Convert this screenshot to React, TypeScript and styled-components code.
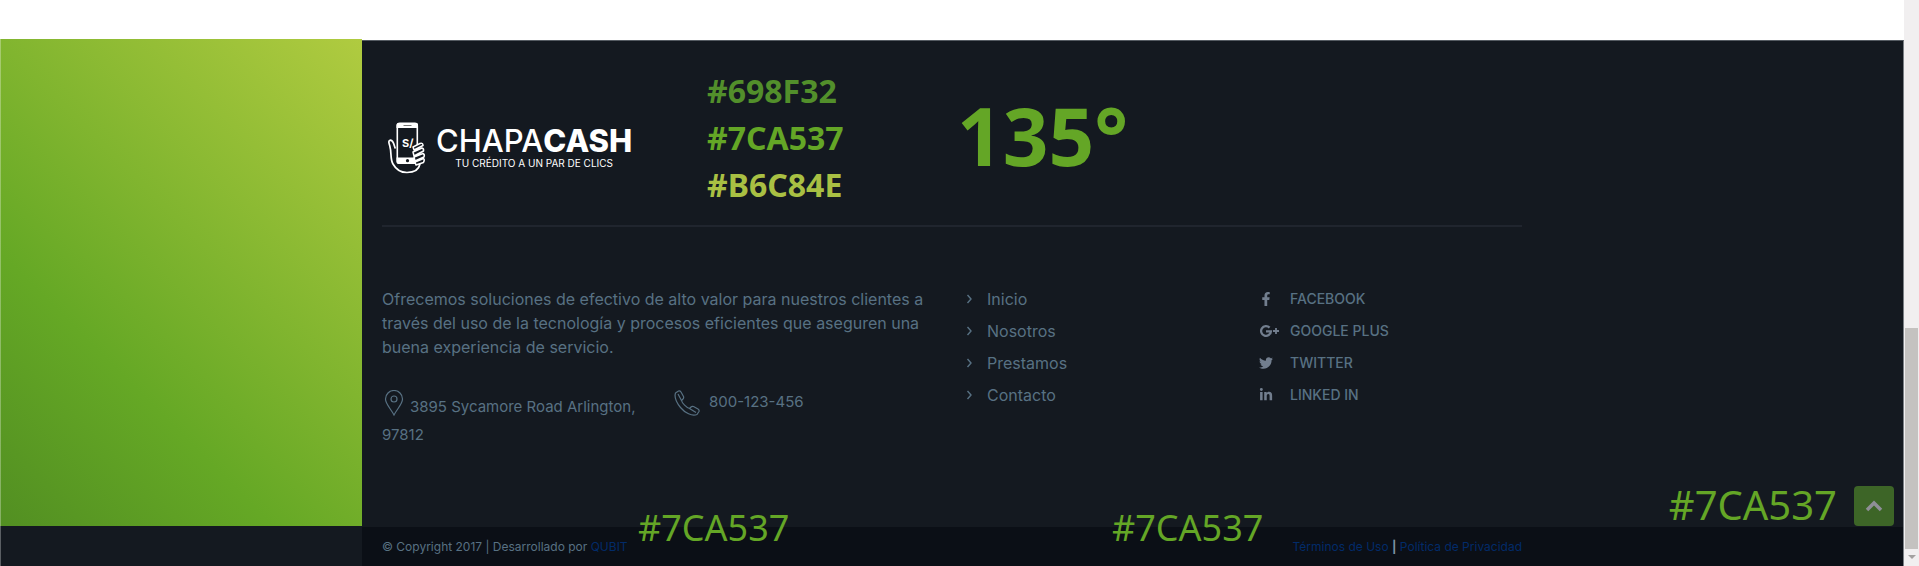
import React from 'react';
import styled, { createGlobalStyle } from 'styled-components';
import { FaFacebookF, FaTwitter, FaLinkedinIn } from 'react-icons/fa';

const Global = createGlobalStyle`
  * { box-sizing: border-box; }
  body { margin: 0; background: #fff; font-family: Inter, 'Noto Sans', sans-serif; }
  ul, p, h1 { margin: 0; padding: 0; list-style: none; }
  a { text-decoration: none; color: inherit; }
`;

const Screen = styled.div`
  display: flex;
  min-height: 100vh;
  overflow: hidden;
`;

const Page = styled.div`
  flex: 1;
  display: flex;
  flex-direction: column;
  padding-top: 39px;
  position: relative;
`;

const Body = styled.div`
  flex: 1;
  display: flex;
`;

const Side = styled.aside`
  width: 362px;
  flex: none;
  display: flex;
  flex-direction: column;
  background: #141920;
`;

const Swatch = styled.div`
  flex: 1;
  border-left: 1px solid rgba(255, 255, 255, 0.3);
  background: linear-gradient(45deg, #528f22 0%, #65a825 32%, #b0cb40 100%) border-box;
`;

const SideBase = styled.div`
  height: 40px;
  border-left: 1px solid rgba(255, 255, 255, 0.3);
`;

const Footer = styled.footer`
  flex: 1;
  display: flex;
  flex-direction: column;
  margin-top: 1px;
  border-top: 1px solid #555b62;
  border-right: 1px solid #7b8085;
  background: #141920;
  color: #587183;
`;

const Container = styled.div`
  width: 100%;
  max-width: 1160px;
  padding: 0 0 0 20px;
`;

const Top = styled(Container)`
  display: flex;
  height: 184px;
`;

const Brand = styled.a`
  display: flex;
  align-items: flex-start;
  width: 325px;
  padding: 80px 0 0 6px;
  gap: 7px;
  color: #fff;
`;

const BrandText = styled.span`
  display: flex;
  flex-direction: column;
  align-items: center;
  padding-top: 4px;
`;

const BrandName = styled.span`
  font-size: 31px;
  line-height: 32px;
  font-weight: 500;
  b { font-weight: 800; }
`;

const Tagline = styled.span`
  font-size: 10px;
  line-height: 12px;
  font-weight: 400;
`;

const Codes = styled.ul`
  width: 250px;
  padding-top: 26px;
  font: 700 32px/47px 'Noto Sans', sans-serif;
`;

const Code = styled.li<{ $color: string }>`
  color: ${(p) => p.$color};
`;

const Angle = styled.p`
  padding-top: 39px;
  font: 700 80px/110px 'Noto Sans', sans-serif;
  color: #64a626;
`;

const Rule = styled.hr`
  width: calc(100% - 20px);
  max-width: 1140px;
  height: 2px;
  margin: 0 0 0 20px;
  border: 0;
  background: #20252e;
`;

const Columns = styled(Container)`
  display: flex;
  flex: 1;
  padding-top: 60px;
`;

const About = styled.section`
  width: 584px;
  font-size: 15px;
`;

const Intro = styled.p`
  width: 550px;
  font-size: 16px;
  line-height: 24px;
`;

const Contact = styled.div`
  display: flex;
  padding-top: 31px;
  line-height: 28px;
`;

const Address = styled.p`
  width: 292px;
  padding-right: 20px;
  svg { vertical-align: -4px; margin-right: 4px; }
`;

const Phone = styled.p`
  display: flex;
  gap: 9px;
  line-height: 24px;
`;

const Menu = styled.ul<{ $width: number; $gap: number; $size: number; $weight: number }>`
  width: ${(p) => p.$width}px;
  font-size: ${(p) => p.$size}px;
  font-weight: ${(p) => p.$weight};
  line-height: 24px;
  li { margin-bottom: 8px; }
  a { display: flex; align-items: center; }
  svg { flex: none; margin-right: ${(p) => p.$gap}px; }
`;

const Bottom = styled.div`
  height: 39px;
  background: #0b0f16;
`;

const BottomRow = styled(Container)`
  display: flex;
  justify-content: space-between;
  font-size: 12px;
  line-height: 40px;
  a { color: #022b69; }
`;

const Separator = styled.b`
  color: #7d93a3;
`;

const Note = styled.span<{ $left: number; $bottom: number; $size: number }>`
  position: absolute;
  left: ${(p) => p.$left}px;
  bottom: ${(p) => p.$bottom}px;
  font: 400 ${(p) => p.$size}px/48px 'Noto Sans', sans-serif;
  color: #64a626;
`;

const RightNote = styled(Note)`
  left: auto;
  right: 67px;
`;

const UpButton = styled.button`
  position: absolute;
  right: 10px;
  bottom: 40px;
  width: 40px;
  height: 40px;
  padding: 0;
  border: 0;
  border-radius: 4px;
  background: #3d6527;
  display: flex;
  align-items: center;
  justify-content: center;
`;

const ScrollTrack = styled.div`
  width: 15px;
  flex: none;
  display: flex;
  flex-direction: column;
  justify-content: flex-end;
  align-items: center;
  background: #f1eff0;
`;

const ScrollThumb = styled.div`
  width: 13px;
  height: 221px;
  background: #c4c2c0;
`;

const ScrollArrow = styled.svg`
  margin: 6px 0 7px;
`;

const Chevron = () => (
  <svg width="7" height="10" viewBox="0 0 7 10" fill="none" stroke="currentColor" strokeWidth="1.4">
    <path d="M1.5 1 L5 5 L1.5 9" />
  </svg>
);

const GooglePlus = () => (
  <svg width="20" height="14" viewBox="0 0 20 14">
    <path d="M10.6 3.6A4.9 4.9 0 1 0 11.9 7.3H7" fill="none" stroke="currentColor" strokeWidth="2.3" />
    <path d="M14 7h6M17 4v6" stroke="currentColor" strokeWidth="1.8" />
  </svg>
);

const LogoMark = () => (
  <svg width="41" height="53" viewBox="0 0 41 53" fill="none" stroke="#fff">
    <rect x="9.3" y="2.3" width="20" height="40" rx="2.5" strokeWidth="1.6" />
    <path d="M8.500 7V4q0-2 2-2h17.500q2 0 2 2v3z" fill="#fff" stroke="none" />
    <path d="M15.500 4.500h8" stroke="#777" strokeWidth="1" />
    <path d="M8.500 36.500h21.500V41q0 2-2 2H10.500q-2 0-2-2z" fill="#fff" stroke="none" />
    <circle cx="19.500" cy="39.700" r="1.600" fill="#141920" stroke="none" />
    <path d="M7.500 27.500C6 26 6.500 20 2.500 19.200C0 19.500 .8 22 1.800 25C3.800 32 2 38 5 43C8 48.500 12.500 51.500 19 51.500C27.500 51.500 31 48 32 43" strokeWidth="1.7" />
    <path d="M25 26L32 22.500q3-1 3 2L26 29zM25 31L34 27q2 .5 1.500 3L26 35zM26 36L35 32.500q2 1 1 3.500L27 40zM27 41L35.500 37.500q1.500 1 0 4L28 44z" fill="#141920" strokeWidth="1.500" strokeLinejoin="round" />
    <text x="14" y="26" fontFamily="Inter, sans-serif" fontSize="11" fontWeight="700" fill="#fff" stroke="none">S/</text>
  </svg>
);

const Pin = () => (
  <svg width="24" height="26" viewBox="0 0 24 26" fill="none" stroke="currentColor" strokeWidth="1.2">
    <path d="M12 25C9 19 3.500 14 3.500 9a8.500 8.500 0 0 1 17 0c0 5-5.500 10-8.500 16z" />
    <circle cx="12" cy="9" r="3" />
  </svg>
);

const Handset = () => (
  <svg width="26" height="26" viewBox="0 0 26 26" fill="none" stroke="currentColor" strokeWidth="1.200" strokeLinejoin="round">
    <path d="M1.500 3L4.500 1Q6 .5 7 2L9.500 6.500Q10 8 9 9L7.500 10.500C8 13 12.500 17.500 15.500 18.500L17 17Q18 16 19.500 16.500L24 19Q25.500 20 25 21.500L23 24.500C18 26.500 11 23 6.500 17.500C2 12 0 7.500 1.500 3z" />
    <path d="M4 4L7.500 10.500M15.500 18.500L22 22.500" />
  </svg>
);

const codes = [
  { text: '#698F32', color: '#528f2b' },
  { text: '#7CA537', color: '#64a626' },
  { text: '#B6C84E', color: '#a9c043' },
];

const links = ['Inicio', 'Nosotros', 'Prestamos', 'Contacto'];

const networks = [
  { label: 'FACEBOOK', icon: <FaFacebookF size={14} /> },
  { label: 'GOOGLE PLUS', icon: <GooglePlus /> },
  { label: 'TWITTER', icon: <FaTwitter size={14} /> },
  { label: 'LINKED IN', icon: <FaLinkedinIn size={14} /> },
];

const NetworkIcon = styled.span`
  display: flex;
  width: 31px;
  color: #727e8e;
`;

export default function App() {
  return (
    <Screen>
      <Global />
      <Page>
        <Body>
          <Side>
            <Swatch />
            <SideBase />
          </Side>
          <Footer>
            <Top>
              <Brand href="#">
                <LogoMark />
                <BrandText>
                  <BrandName>CHAPA<b>CASH</b></BrandName>
                  <Tagline>TU CRÉDITO A UN PAR DE CLICS</Tagline>
                </BrandText>
              </Brand>
              <Codes>
                {codes.map((c) => (
                  <Code key={c.text} $color={c.color}>{c.text}</Code>
                ))}
              </Codes>
              <Angle>135°</Angle>
            </Top>
            <Rule />
            <Columns>
              <About>
                <Intro>
                  Ofrecemos soluciones de efectivo de alto valor para nuestros clientes a través del
                  uso de la tecnología y procesos eficientes que aseguren una buena experiencia de
                  servicio.
                </Intro>
                <Contact>
                  <Address><Pin />3895 Sycamore Road Arlington, 97812</Address>
                  <Phone><Handset />800-123-456</Phone>
                </Contact>
              </About>
              <Menu $width={293} $gap={14} $size={16} $weight={400}>
                {links.map((l) => (
                  <li key={l}><a href="#"><Chevron />{l}</a></li>
                ))}
              </Menu>
              <Menu $width={200} $gap={0} $size={14} $weight={500}>
                {networks.map((n) => (
                  <li key={n.label}><a href="#"><NetworkIcon>{n.icon}</NetworkIcon>{n.label}</a></li>
                ))}
              </Menu>
            </Columns>
            <Bottom>
              <BottomRow>
                <span>© Copyright 2017 | Desarrollado por <a href="#">QUBIT</a></span>
                <span><a href="#">Términos de Uso</a> <Separator>|</Separator> <a href="#">Política de Privacidad</a></span>
              </BottomRow>
            </Bottom>
          </Footer>
        </Body>
        <Note $left={638} $bottom={14} $size={36}>#7CA537</Note>
        <Note $left={1112} $bottom={14} $size={36}>#7CA537</Note>
        <RightNote $left={0} $bottom={37} $size={40}>#7CA537</RightNote>
        <UpButton aria-label="Subir">
          <svg width="18" height="12" viewBox="0 0 18 12" fill="none" stroke="#8f8f97" strokeWidth="3.500">
            <path d="M2 10L9 3L16 10" />
          </svg>
        </UpButton>
      </Page>
      <ScrollTrack>
        <ScrollThumb />
        <ScrollArrow width="8" height="4" viewBox="0 0 8 4"><path d="M0 0h8L4 4z" fill="#a3a1a1" /></ScrollArrow>
      </ScrollTrack>
    </Screen>
  );
}
